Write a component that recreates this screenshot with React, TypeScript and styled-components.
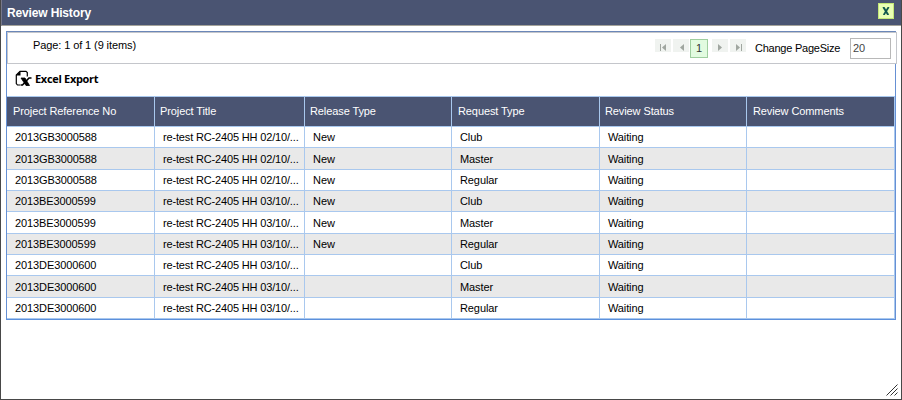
import React from "react";
import styled, { createGlobalStyle } from "styled-components";

const GlobalStyle = createGlobalStyle`
  * { box-sizing: border-box; }
  html, body { margin: 0; padding: 0; background: #444; }
  body { font: 11px/13px "Liberation Sans", Arial, sans-serif; color: #000; }
`;

const Dialog = styled.div`
  width: 902px;
  height: 400px;
  display: flex;
  flex-direction: column;
  background: #fff;
  border: solid #484848;
  border-width: 0 1px 1px 1px;
  position: relative;
  overflow: hidden;
`;

const TitleBar = styled.header`
  height: 26px;
  flex: none;
  display: flex;
  justify-content: space-between;
  align-items: flex-start;
  padding: 3px 7px 0 5px;
  background: #4a5472;
  border-bottom: 1px solid #a5a39a;
  border-left: 1px solid #77788a;
`;

const Title = styled.h1`
  margin: 0;
  padding-top: 3px;
  font-size: 12px;
  line-height: 14px;
  font-weight: bold;
  color: #fff;
  letter-spacing: -0.15px;
`;

const CloseButton = styled.button`
  width: 16px;
  height: 16px;
  padding: 0;
  display: grid;
  place-items: center;
  border: 1px solid #c4e878;
  background: #eaffb4;
`;

const Grid = styled.section`
  margin: 5px 0 0 5px;
  width: 890px;
  height: 289px;
  border: 1px solid #6690d4;
  border-top-color: #6b87b8;
  border-bottom-color: #5c90dc;
  display: flex;
  flex-direction: column;
`;

const Pager = styled.div`
  height: 32px;
  width: 890px;
  flex: none;
  display: flex;
  align-items: center;
  background: #fff;
  border: 1px solid #c4c6cb;
  padding: 0 5px 0 25px;
`;

const Summary = styled.span`
  letter-spacing: -0.1px;
  margin-right: auto;
  padding-bottom: 5px;
`;

const PageButtons = styled.div`
  display: flex;
  gap: 2px;
  margin-right: 9px;
`;

const PageArrow = styled.button`
  width: 16px;
  height: 13px;
  padding: 5px 0 0 1px;
  border: 0;
  background: #f0f3f0;
  display: grid;
  justify-items: center;
  align-items: start;
`;

const CurrentPage = styled.span`
  width: 18px;
  height: 19px;
  margin: 0 2px 0 -1px;
  border: 1px solid #9fce9f;
  background: #e2fbe0;
  text-align: center;
  line-height: 17px;
  color: #333;
`;

const SizeLabel = styled.label`
  letter-spacing: -0.24px;
  width: 95px;
`;

const SizeInput = styled.input`
  width: 41px;
  height: 21px;
  border: 1px solid #b8b8b8;
  padding: 0 2px;
  font: 11px "Liberation Sans", Arial, sans-serif;
  color: #444;
  background: #fff;
  outline: none;
`;

const ExportButton = styled.button`
  height: 32px;
  flex: none;
  display: flex;
  align-items: center;
  gap: 3px;
  padding: 0 0 3px 8px;
  border: 0;
  background: none;
  font: bold 11px "Open Sans", "Noto Sans", sans-serif;
  letter-spacing: -0.31px;
  color: #000;
`;

const Table = styled.table`
  width: 888px;
  table-layout: fixed;
  border-collapse: separate;
  border-spacing: 0;
`;

const HeaderCell = styled.th<{ $inset: number }>`
  height: 31px;
  padding: 0 0 0 ${(p) => p.$inset}px;
  text-align: left;
  font-weight: normal;
  color: #fff;
  background: #4a5472;
  border: solid #a9c8ee;
  border-width: 1px 1px 1px 0;
  white-space: nowrap;
  letter-spacing: -0.1px;
`;

const Row = styled.tr<{ $height: number; $shaded: boolean }>`
  height: ${(p) => p.$height}px;
  background: ${(p) => (p.$shaded ? "#e9e9e9" : "#fff")};
`;

const Cell = styled.td<{ $tracking?: number; $drop: number }>`
  padding: ${(p) => p.$drop}px 0 0 8px;
  border-right: 1px solid #a9c8ee;
  border-bottom: 1px solid #a9c8ee;
  white-space: nowrap;
  letter-spacing: ${(p) => p.$tracking ?? 0}px;
`;

const ResizeHandle = styled.svg`
  position: absolute;
  right: 3px;
  bottom: 3px;
`;

const columns: [string, number, number][] = [
  ["Project Reference No", 148, 6],
  ["Project Title", 150, 5],
  ["Release Type", 147, 5],
  ["Request Type", 148, 6],
  ["Review Status", 147, 5],
  ["Review Comments", 148, 6],
];

const kinds = ["Club", "Master", "Regular"];
const projects = [
  { id: "2013GB3000588", title: "re-test RC-2405 HH 02/10/...", release: "New" },
  { id: "2013BE3000599", title: "re-test RC-2405 HH 03/10/...", release: "New" },
  { id: "2013DE3000600", title: "re-test RC-2405 HH 03/10/...", release: "" },
];
const rows = projects.flatMap((p) => kinds.map((kind) => ({ ...p, kind })));
const rowHeights = [21, 22, 21, 21, 22, 21, 21, 22, 21];

const Arrow = ({ label, flip, bar }: { label: string; flip?: boolean; bar?: boolean }) => (
  <PageArrow aria-label={label}>
    <svg width="9" height="7" viewBox="0 0 9 7">
      <g transform={flip ? "translate(9 0) scale(-1 1)" : undefined} fill="#a0a6a0">
        {bar && <path d="M1 0h1v7H1z" />}
        <path d="M7 0v7L3 3.500z" />
      </g>
    </svg>
  </PageArrow>
);

export default function App() {
  return (
    <>
      <GlobalStyle />
      <Dialog>
        <TitleBar>
          <Title>Review History</Title>
          <CloseButton aria-label="Close">
            <svg width="8" height="8" viewBox="0 0 8 8">
              <path d="M1.300 0l5 8" stroke="#12584e" strokeWidth="2" />
              <path d="M6.700 0l-5 8" stroke="#12584e" strokeWidth="1.800" />
            </svg>
          </CloseButton>
        </TitleBar>
        <Grid>
          <Pager>
            <Summary>Page: 1 of 1 (9 items)</Summary>
            <PageButtons>
              <Arrow label="First page" bar />
              <Arrow label="Previous page" />
              <CurrentPage>1</CurrentPage>
              <Arrow label="Next page" flip />
              <Arrow label="Last page" flip bar />
            </PageButtons>
            <SizeLabel htmlFor="size">Change PageSize</SizeLabel>
            <SizeInput id="size" defaultValue="20" />
          </Pager>
          <ExportButton>
            <svg width="17" height="17" viewBox="0 0 17 17">
              <path d="M12.300 6.500V2.500L11 1.300H5L1.300 5v8.500L2.500 15H5" fill="none" stroke="#000" strokeWidth="1.200" />
              <path d="M5.500 1v4.500H1z" fill="#000" />
              <path d="M6 8h4l4.500 7.500h-3.500z" fill="#000" stroke="#000" strokeWidth=".8" />
              <path d="M16.500 8H14L7.500 15H5.500" fill="none" stroke="#000" strokeWidth="1.600" />
            </svg>
            Excel Export
          </ExportButton>
          <Table>
            <colgroup>
              {columns.map(([name, width]) => (
                <col key={name} width={width} />
              ))}
            </colgroup>
            <thead>
              <tr>
                {columns.map(([name, , inset]) => (
                  <HeaderCell key={name} $inset={inset}>
                    {name}
                  </HeaderCell>
                ))}
              </tr>
            </thead>
            <tbody>
              {rows.map((r, i) => {
                const drop = rowHeights[i] === 22 || i === rows.length - 1 ? 1 : 0;
                return (
                  <Row key={i} $height={rowHeights[i]} $shaded={i % 2 === 1}>
                    <Cell $drop={drop} $tracking={-0.1}>{r.id}</Cell>
                    <Cell $drop={drop} $tracking={-0.16}>{r.title}</Cell>
                    <Cell $drop={drop}>{r.release}</Cell>
                    <Cell $drop={drop} $tracking={-0.1}>{r.kind}</Cell>
                    <Cell $drop={drop} $tracking={-0.12}>Waiting</Cell>
                    <Cell $drop={drop} />
                  </Row>
                );
              })}
            </tbody>
          </Table>
        </Grid>
        <ResizeHandle width="12" height="12" viewBox="0 0 12 12" stroke="#333" fill="none">
          <path d="M.5 11.500l11-11M4.500 11.500l7-7M8.500 11.500l3-3" />
        </ResizeHandle>
      </Dialog>
    </>
  );
}
